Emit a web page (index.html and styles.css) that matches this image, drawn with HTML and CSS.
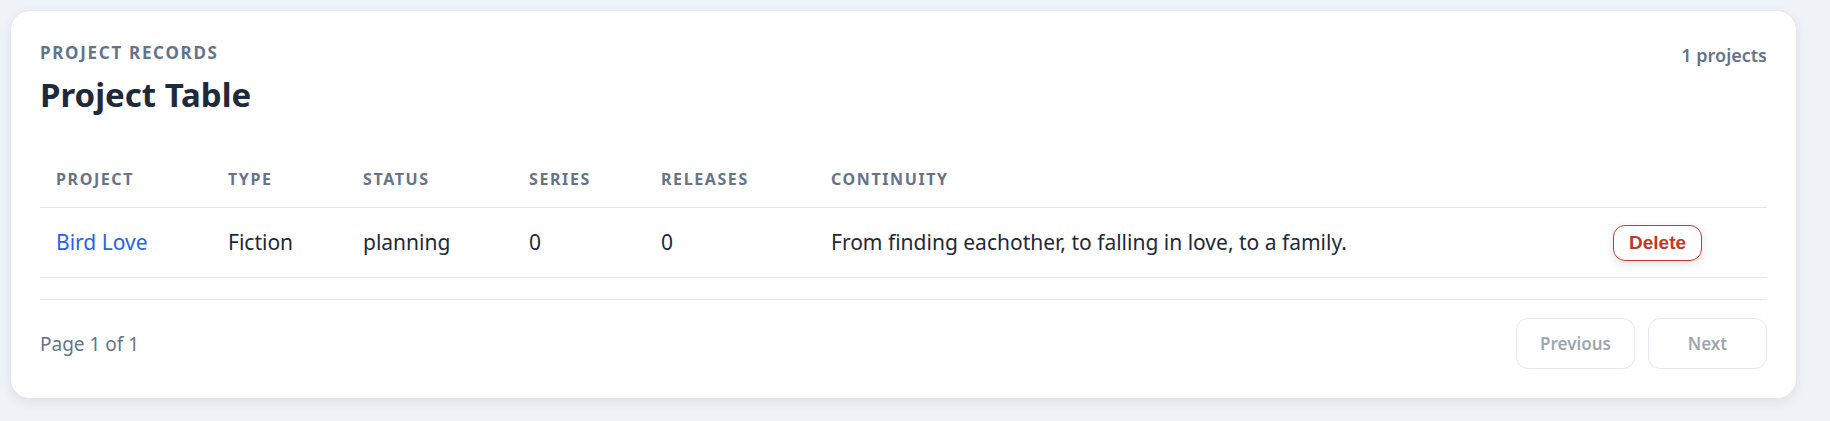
FILE: index.html
```html
<!DOCTYPE html>
<html lang="en">
<head>
    <meta charset="UTF-8">
    <meta name="viewport" content="width=device-width, initial-scale=1.0">
    <title>Project Table</title>
    <link rel="stylesheet" href="styles.css">
</head>
<body>
    <div class="card">
        <div class="card-header">
            <div>
                <div class="eyebrow">Project Records</div>
                <h1 class="title">Project Table</h1>
            </div>
            <div class="count">1 projects</div>
        </div>

        <div class="table-wrap">
            <table class="projects">
                <colgroup>
                    <col style="width: 172px">
                    <col style="width: 135px">
                    <col style="width: 166px">
                    <col style="width: 132px">
                    <col style="width: 170px">
                    <col>
                    <col style="width: 170px">
                </colgroup>
                <thead>
                    <tr>
                        <th>Project</th>
                        <th>Type</th>
                        <th>Status</th>
                        <th>Series</th>
                        <th>Releases</th>
                        <th>Continuity</th>
                        <th></th>
                    </tr>
                </thead>
                <tbody>
                    <tr>
                        <td><a href="#" class="project-link">Bird Love</a></td>
                        <td>Fiction</td>
                        <td>planning</td>
                        <td>0</td>
                        <td>0</td>
                        <td>From finding eachother, to falling in love, to a family.</td>
                        <td><button class="delete-btn">Delete</button></td>
                    </tr>
                </tbody>
            </table>
        </div>

        <div class="pager">
            <span class="page-info">Page 1 of 1</span>
            <div class="pager-btns">
                <button class="pager-btn" disabled>Previous</button>
                <button class="pager-btn" disabled>Next</button>
            </div>
        </div>
    </div>
</body>
</html>
```

FILE: styles.css
```css
body {
    margin: 0;
    padding: 10px 33px 23px 10px;
    background: #eff2f7;
    font-family: "Noto Sans", "Open Sans", sans-serif;
    color: #1e293b;
}

.card {
    background: #fff;
    border: 1px solid #e3e8ef;
    border-radius: 20px;
    padding: 29px;
    box-shadow: 0 4px 12px rgba(15, 23, 42, 0.07);
}

.card-header {
    display: flex;
    justify-content: space-between;
    align-items: flex-start;
}

.eyebrow {
    font-size: 17px;
    line-height: 26px;
    font-weight: 700;
    letter-spacing: 0.1em;
    text-transform: uppercase;
    color: #64748b;
}

.title {
    margin: 9px 0 0;
    font-size: 33px;
    line-height: 40px;
    font-weight: 700;
    color: #1e293b;
}

.count {
    margin-top: 4px;
    font-size: 18px;
    line-height: 22px;
    font-weight: 600;
    color: #64748b;
}

.table-wrap {
    margin-top: 36px;
    margin-bottom: 21px;
}

.projects {
    width: 100%;
    border-collapse: collapse;
    table-layout: fixed;
}

.projects th {
    text-align: left;
    padding: 18px 16px;
    font-size: 16px;
    line-height: 20px;
    font-weight: 700;
    letter-spacing: 0.1em;
    text-transform: uppercase;
    color: #64748b;
    border-bottom: 1px solid #e2e8f0;
}

.projects td {
    height: 36px;
    padding: 16px;
    font-size: 21px;
    line-height: 35px;
    color: #1e293b;
    border-bottom: 1px solid #e2e8f0;
    white-space: nowrap;
    vertical-align: middle;
}

.project-link {
    color: #2563eb;
    text-decoration: none;
}

.delete-btn {
    height: 36px;
    padding: 0 15px;
    vertical-align: middle;
    background: #fff;
    border: 1px solid #c93a2c;
    border-radius: 12px;
    color: #c0392b;
    font-family: "Liberation Sans", Arial, sans-serif;
    font-size: 19px;
    font-weight: 700;
    box-shadow: 0 3px 8px rgba(15, 23, 42, 0.12);
    cursor: pointer;
}

.pager {
    display: flex;
    justify-content: space-between;
    align-items: center;
    border-top: 1px solid #e2e8f0;
    padding-top: 18px;
}

.page-info {
    font-size: 19px;
    color: #64748b;
}

.pager-btns {
    display: flex;
    gap: 13px;
}

.pager-btn {
    width: 119px;
    height: 51px;
    background: #fff;
    border: 1px solid #e5e8ee;
    border-radius: 12px;
    color: #a0a6b1;
    font-family: "Noto Sans", sans-serif;
    font-size: 17px;
    font-weight: 600;
}
```
